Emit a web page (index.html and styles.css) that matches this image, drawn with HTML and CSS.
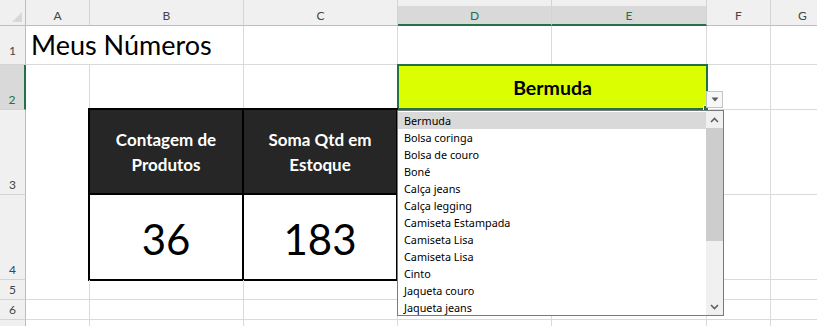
FILE: index.html
```html
<!DOCTYPE html>
<html lang="pt-BR">
<head>
  <meta charset="UTF-8">
  <title>Meus Números</title>
  <link rel="stylesheet" href="styles.css">
</head>
<body>

  <div class="sheet">
    <!-- cabeçalho das colunas -->
    <div class="corner"><span class="corner-tri"></span></div>
    <div class="colhead">A</div>
    <div class="colhead">B</div>
    <div class="colhead">C</div>
    <div class="colhead sel">D</div>
    <div class="colhead sel">E</div>
    <div class="colhead">F</div>
    <div class="colhead">G</div>

    <!-- linha 1 -->
    <div class="rowhead first">1</div>
    <div class="cell title">Meus Números</div>
    <div class="cell"></div>
    <div class="cell"></div>
    <div class="cell"></div>
    <div class="cell"></div>
    <div class="cell"></div>

    <!-- linha 2 -->
    <div class="rowhead sel">2</div>
    <div class="cell no-bottom"></div>
    <div class="cell"></div>
    <div class="cell"></div>
    <div class="cell picked">Bermuda</div>
    <div class="cell"></div>
    <div class="cell"></div>

    <!-- linhas 3 e 4 -->
    <div class="rowhead">3</div>
    <div class="blank"></div>
    <div class="summary">
      <div class="sum-head">Contagem de<br>Produtos</div>
      <div class="sum-head">Soma Qtd em<br>Estoque</div>
      <div class="sum-value">36</div>
      <div class="sum-value">183</div>
    </div>
    <div class="cell"></div>
    <div class="cell"></div>
    <div class="cell"></div>
    <div class="cell"></div>

    <div class="rowhead">4</div>
    <div class="cell"></div>
    <div class="cell"></div>
    <div class="cell"></div>
    <div class="cell"></div>

    <!-- linha 5 -->
    <div class="rowhead">5</div>
    <div class="cell"></div>
    <div class="cell"></div>
    <div class="cell"></div>
    <div class="cell"></div>
    <div class="cell"></div>
    <div class="cell"></div>
    <div class="cell"></div>

    <!-- linha 6 -->
    <div class="rowhead">6</div>
    <div class="cell"></div>
    <div class="cell"></div>
    <div class="cell"></div>
    <div class="cell"></div>
    <div class="cell"></div>
    <div class="cell"></div>
    <div class="cell"></div>

    <!-- linha 7 (só a borda aparece) -->
    <div class="rowhead"></div>
    <div class="cell"></div>
    <div class="cell"></div>
    <div class="cell"></div>
    <div class="cell"></div>
    <div class="cell"></div>
    <div class="cell"></div>
    <div class="cell"></div>

    <!-- validação de dados: botão e lista aberta -->
    <span class="fill-handle"></span>
    <div class="drop-btn">
      <svg width="8" height="5" viewBox="0 0 8 5"><path d="M0.5 0.5 L7.5 0.5 L4 4.5 Z" fill="#5a5a5a"/></svg>
    </div>
    <div class="drop-list">
      <div class="options">
        <div class="opt on">Bermuda</div>
        <div class="opt">Bolsa coringa</div>
        <div class="opt">Bolsa de couro</div>
        <div class="opt">Boné</div>
        <div class="opt">Calça jeans</div>
        <div class="opt">Calça legging</div>
        <div class="opt">Camiseta Estampada</div>
        <div class="opt">Camiseta Lisa</div>
        <div class="opt">Camiseta Lisa</div>
        <div class="opt">Cinto</div>
        <div class="opt">Jaqueta couro</div>
        <div class="opt">Jaqueta jeans</div>
      </div>
      <div class="scroll">
        <div class="arrow">
          <svg width="9" height="6" viewBox="0 0 9 6"><path d="M1 5 L4.5 1.5 L8 5" fill="none" stroke="#606060" stroke-width="1.6"/></svg>
        </div>
        <div class="thumb"></div>
        <div class="track"></div>
        <div class="arrow">
          <svg width="9" height="6" viewBox="0 0 9 6"><path d="M1 1 L4.5 4.5 L8 1" fill="none" stroke="#606060" stroke-width="1.6"/></svg>
        </div>
      </div>
    </div>
  </div>

</body>
</html>
```

FILE: styles.css
```css
* {
  box-sizing: border-box;
}

body {
  margin: 0;
  background: #fff;
  font-family: Lato, "Liberation Sans", sans-serif;
  overflow: hidden;
}

.sheet {
  position: relative;
  display: grid;
  grid-template-columns: 26px 64px 154px 154px 154px 155px 64px 64px;
  grid-template-rows: 26px 39px 45px 85px 85px 20px 20px 20px;
}

/* cabeçalhos */
.corner {
  background: #f0f0f0;
  border-right: 1px solid #bdbdbd;
  border-bottom: 1px solid #bdbdbd;
  display: flex;
  justify-content: flex-end;
  align-items: flex-end;
  padding: 0 3px 3px 0;
}

.corner-tri {
  width: 0;
  height: 0;
  border-left: 10px solid transparent;
  border-bottom: 10px solid #d8d8d8;
}

.colhead {
  background: #f0f0f0;
  border-right: 1px solid #d4d4d4;
  border-bottom: 1px solid #bdbdbd;
  padding-top: 6px;
  line-height: 19px;
  font-size: 12px;
  color: #444;
  text-align: center;
}

.colhead.sel {
  background: linear-gradient(#f0f0f0 6px, #d9d9d9 6px);
  border-bottom: 2px solid #217346;
  color: #217346;
}

.rowhead {
  background: #f0f0f0;
  border-right: 1px solid #bdbdbd;
  border-bottom: 1px solid #d4d4d4;
  display: flex;
  justify-content: center;
  align-items: flex-end;
  padding-bottom: 2px;
  font-size: 12px;
  color: #444;
}

.rowhead.first {
  padding-bottom: 6px;
}

.rowhead.sel {
  background: #d9d9d9;
  border-right: 2px solid #217346;
  color: #217346;
}

/* células */
.cell {
  border-right: 1px solid #dadada;
  border-bottom: 1px solid #dadada;
}

.cell.no-bottom {
  border-bottom: none;
}

.title {
  grid-column: span 2;
  display: flex;
  align-items: flex-end;
  padding: 0 0 3px 5px;
  font-size: 27px;
  white-space: nowrap;
  color: #000;
}

.picked {
  grid-column: span 2;
  margin: -1px -1px 0 -1px;
  background: #dbff00;
  border: 2px solid #217346;
  display: flex;
  justify-content: center;
  align-items: center;
  font-size: 19.5px;
  font-weight: bold;
  color: #000;
}

.blank {
  grid-column: 2;
  grid-row: 4 / span 2;
}

.summary {
  grid-column: 3 / span 2;
  grid-row: 4 / span 2;
  margin: -2px 0 -1px -2px;
  background: #000;
  padding: 2px;
  display: grid;
  grid-template-columns: 1fr 1fr;
  grid-template-rows: 83px 1fr;
  gap: 2px;
}

.sum-head {
  background: #262626;
  color: #fff;
  font-size: 17px;
  font-weight: bold;
  line-height: 25px;
  text-align: center;
  display: flex;
  align-items: center;
  justify-content: center;
}

.sum-value {
  background: #fff;
  color: #000;
  font-size: 42px;
  display: flex;
  align-items: center;
  justify-content: center;
  padding-top: 3px;
}

/* lista suspensa */
.fill-handle {
  position: absolute;
  left: 703px;
  top: 105px;
  width: 6px;
  height: 6px;
  background: #217346;
  border: 1px solid #fff;
}

.drop-btn {
  position: absolute;
  left: 706px;
  top: 91px;
  width: 17px;
  height: 17px;
  background: #f7f7f7;
  border: 1px solid #c4c4c4;
  display: flex;
  justify-content: center;
  align-items: center;
}

.drop-list {
  position: absolute;
  left: 397px;
  top: 110px;
  width: 327px;
  height: 206px;
  background: #fff;
  border: 1px solid #7a7a7a;
  display: flex;
  overflow: hidden;
}

.options {
  flex: 1;
  padding-top: 1px;
}

.opt {
  height: 17px;
  line-height: 17px;
  padding-left: 6px;
  font-family: "Noto Sans", sans-serif;
  font-size: 10.8px;
  color: #000;
  white-space: nowrap;
}

.opt.on {
  background: #d9d9d9;
}

.scroll {
  width: 17px;
  background: #f0f0f0;
  display: flex;
  flex-direction: column;
}

.arrow {
  height: 17px;
  display: flex;
  justify-content: center;
  align-items: center;
}

.thumb {
  height: 113px;
  background: #cdcdcd;
}

.track {
  flex: 1;
}
```
